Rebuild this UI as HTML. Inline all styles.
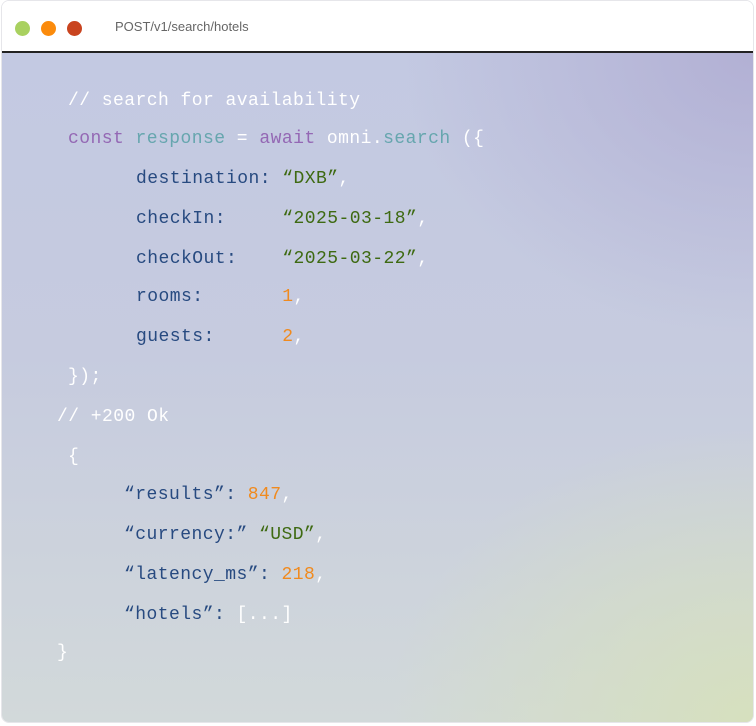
<!DOCTYPE html>
<html><head><meta charset="utf-8"><style>
html,body{margin:0;padding:0;background:#fff;width:756px;height:726px;overflow:hidden}
.win{position:absolute;left:1px;top:0;width:753px;height:723px;border-radius:8px;overflow:hidden;border:1px solid #e6e6ea;box-sizing:border-box;background:#fff}
.hdr{position:absolute;left:0;top:0;right:0;height:50px;background:#fff;border-bottom:2px solid #222}
.dot{position:absolute;top:20px;width:15px;height:15px;border-radius:50%}
.title{position:absolute;left:113px;top:18px;font:13px "Liberation Sans",sans-serif;color:#666}
.body{position:absolute;left:0;top:52px;right:0;bottom:0;
background:
radial-gradient(ellipse 520px 420px at 100% 100%, rgba(214,224,190,1), rgba(214,224,190,0) 70%),
radial-gradient(ellipse 500px 400px at 100% 0%, rgba(178,176,212,1), rgba(178,176,212,0) 70%),
linear-gradient(180deg,#c3c9e2 0%,#c6cbdf 45%,#d2d9da 100%);}
.l{position:absolute;font:18px "Liberation Mono",monospace;letter-spacing:0.45px;white-space:pre;color:#fff;line-height:22px}
.p{color:#9468b4}.t{color:#66a6ae}.k{color:#274a80}.s{color:#3e6a12}.n{color:#f08a1e}.w{color:#fff}
</style></head><body>
<div class="win">
<div class="hdr">
<div class="dot" style="left:13px;background:#a9d160"></div>
<div class="dot" style="left:39px;background:#fb8b0c"></div>
<div class="dot" style="left:65px;background:#c9441f"></div>
<div class="title">POST/v1/search/hotels</div>
</div>
<div class="body"></div>
<div class="l" style="left:66px;top:89px">// search for availability</div>
<div class="l" style="left:66px;top:127px"><span class="p">const</span> <span class="t">response</span> = <span class="p">await</span> omni.<span class="t">search</span> ({</div>
<div class="l k" style="left:134px;top:167px">destination: <span class="s">“DXB”</span><span class="w">,</span></div>
<div class="l k" style="left:134px;top:207px">checkIn:     <span class="s">“2025-03-18”</span><span class="w">,</span></div>
<div class="l k" style="left:134px;top:247px">checkOut:    <span class="s">“2025-03-22”</span><span class="w">,</span></div>
<div class="l k" style="left:134px;top:285px">rooms:       <span class="n">1</span><span class="w">,</span></div>
<div class="l k" style="left:134px;top:325px">guests:      <span class="n">2</span><span class="w">,</span></div>
<div class="l" style="left:66px;top:365px">});</div>
<div class="l" style="left:55px;top:405px">// +200 Ok</div>
<div class="l" style="left:66px;top:445px">{</div>
<div class="l k" style="left:122px;top:483px">“results”: <span class="n">847</span><span class="w">,</span></div>
<div class="l k" style="left:122px;top:523px">“currency:” <span class="s">“USD”</span><span class="w">,</span></div>
<div class="l k" style="left:122px;top:563px">“latency_ms”: <span class="n">218</span><span class="w">,</span></div>
<div class="l k" style="left:122px;top:603px">“hotels”: <span class="w">[...]</span></div>
<div class="l" style="left:55px;top:641px">}</div>
</div>
</body></html>
